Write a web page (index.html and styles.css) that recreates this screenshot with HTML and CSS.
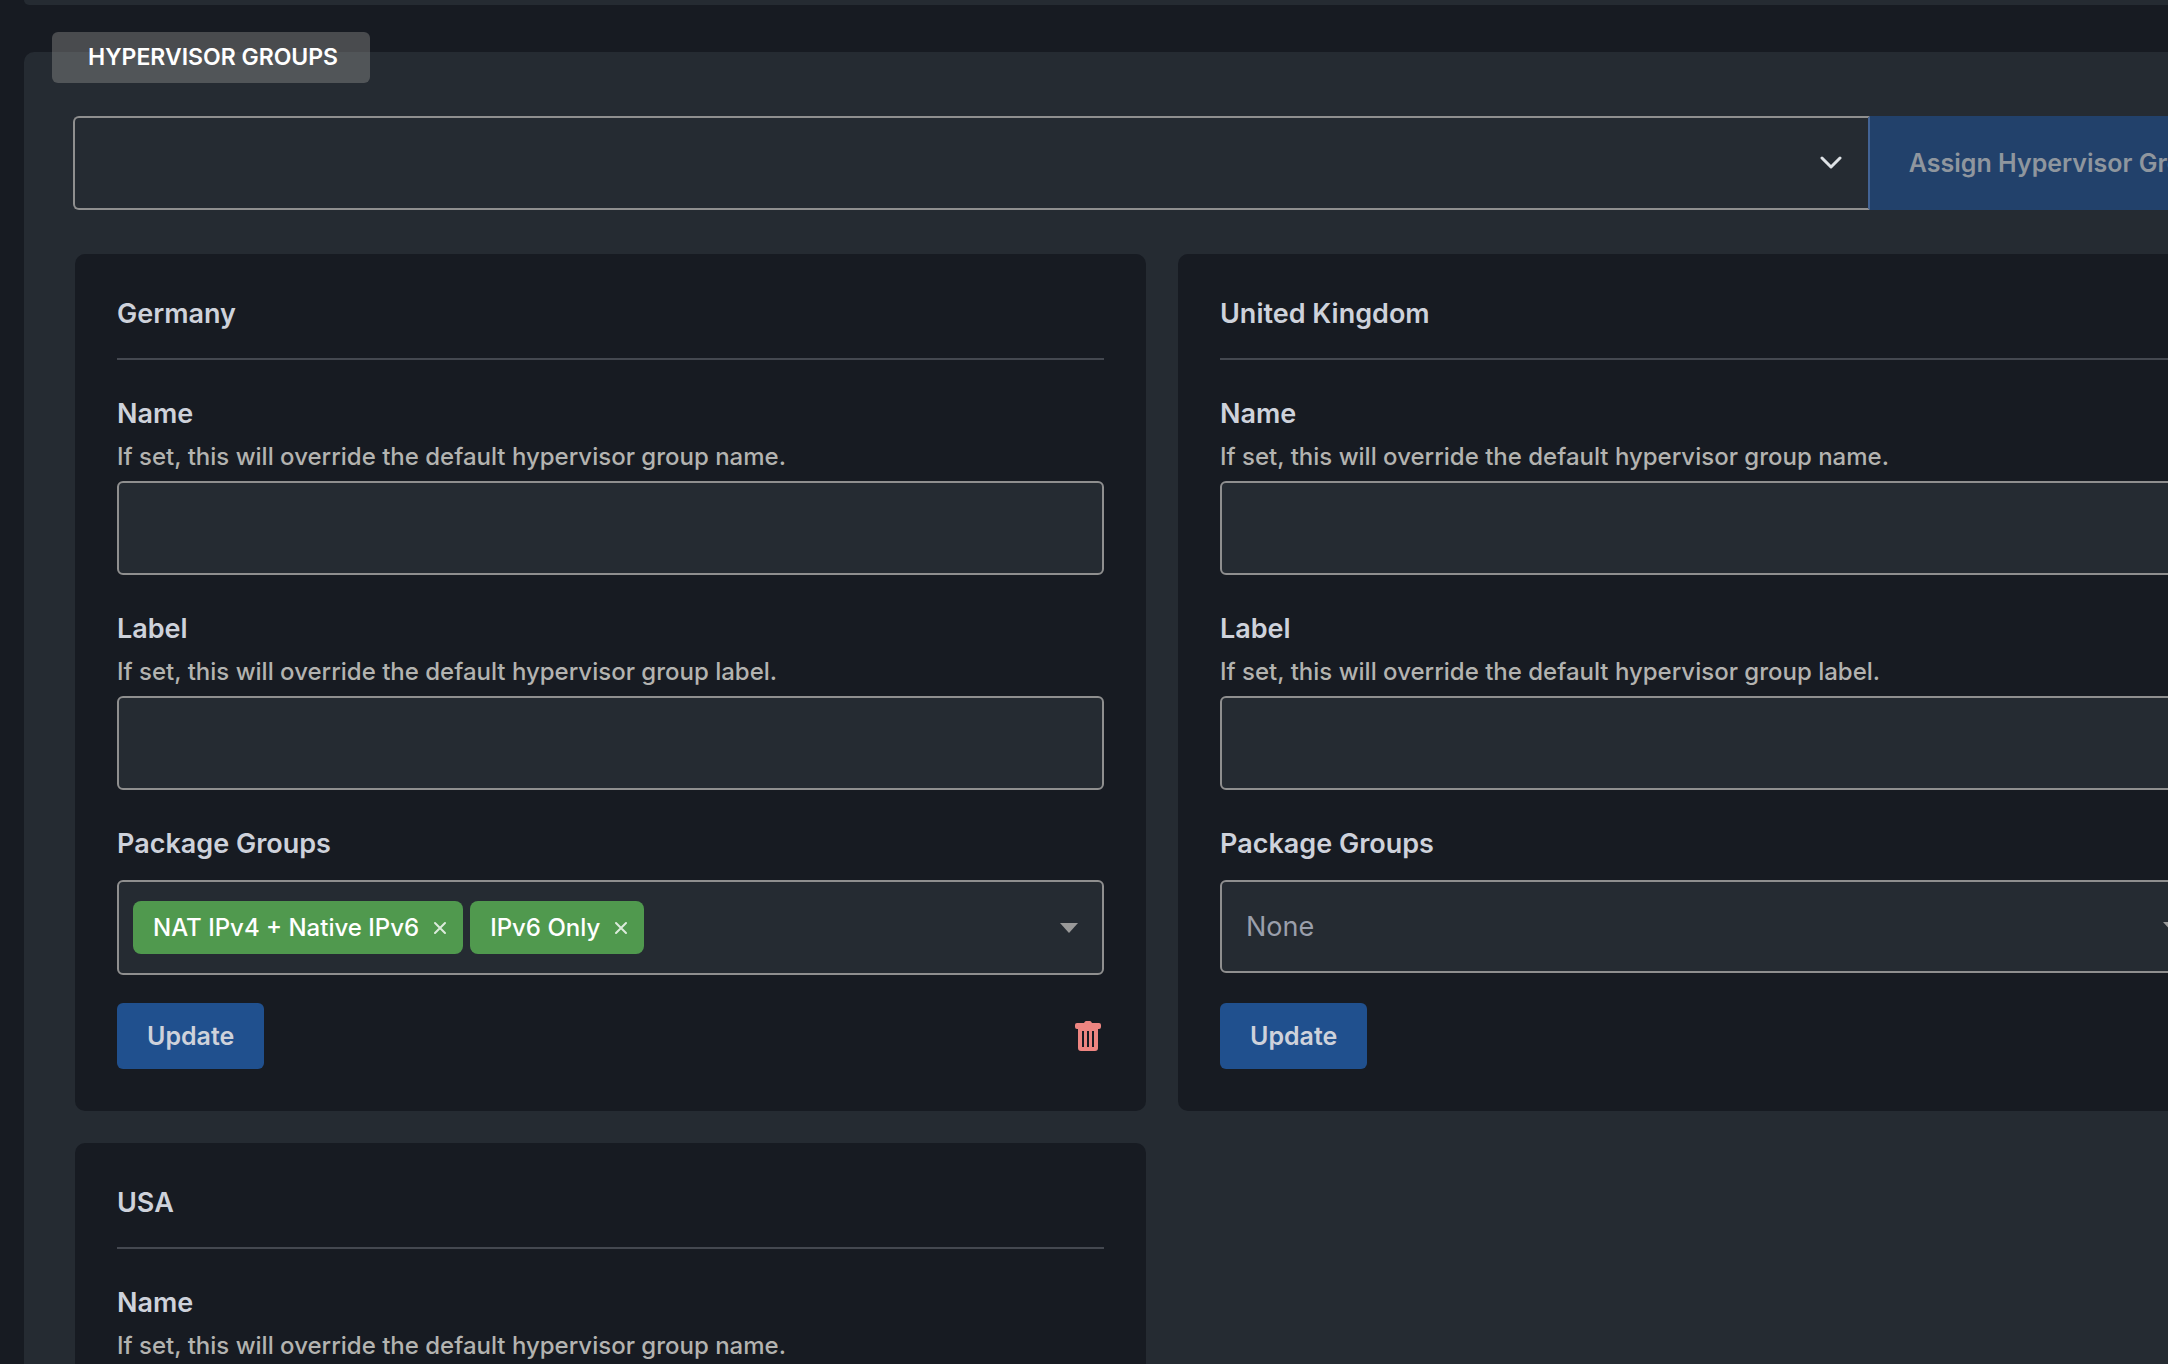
FILE: index.html
```html
<!DOCTYPE html>
<html lang="en">
<head>
	<meta charset="utf-8">
	<title>Hypervisor Groups</title>
	<link rel="stylesheet" href="styles.css">
</head>
<body>
	<main class="page">
		<div class="panel panel-previous"></div>

		<section class="panel">
			<h2 class="panel-title">HYPERVISOR GROUPS</h2>

			<form class="assign">
				<div class="assign-select">
					<select class="control" id="group" aria-label="Hypervisor group">
						<option></option>
					</select>
					<svg class="chevron" viewBox="0 0 22 14"><path d="M2 2l9 9 9-9"/></svg>
				</div>
				<button type="button" class="btn assign-btn" disabled>Assign Hypervisor Group</button>
			</form>

			<div class="cards">
				<form class="card">
					<h3>Germany</h3>
					<div class="field">
						<label for="de-name">Name</label>
						<p class="help">If set, this will override the default hypervisor group name.</p>
						<input class="control" type="text" id="de-name">
					</div>
					<div class="field">
						<label for="de-label">Label</label>
						<p class="help">If set, this will override the default hypervisor group label.</p>
						<input class="control" type="text" id="de-label">
					</div>
					<div class="field packages">
						<label id="de-packages">Package Groups</label>
						<div class="control multi has-tags" role="group" aria-labelledby="de-packages">
							<span class="tag">NAT IPv4 + Native IPv6
								<button type="button" aria-label="Remove"><svg viewBox="0 0 14 14"><path d="M2 2l10 10M12 2L2 12"/></svg></button>
							</span>
							<span class="tag">IPv6 Only
								<button type="button" aria-label="Remove"><svg viewBox="0 0 14 14"><path d="M2 2l10 10M12 2L2 12"/></svg></button>
							</span>
							<span class="caret"></span>
						</div>
					</div>
					<div class="actions">
						<button type="button" class="btn">Update</button>
						<button type="button" class="delete" aria-label="Delete">
							<svg viewBox="0 0 26 30"><path fill-rule="evenodd" d="M9 2q1-2 2-2h4q1 0 2 2h7q2 0 2 2v2q0 2-2 2h-1v19q0 3-3 3H6q-3 0-3-3V8H2Q0 8 0 6V4q0-2 2-2zM7 10v16h2V10zM12 10v16h2V10zM17 10v16h2V10z"/></svg>
						</button>
					</div>
				</form>

				<form class="card">
					<h3>United Kingdom</h3>
					<div class="field">
						<label for="uk-name">Name</label>
						<p class="help">If set, this will override the default hypervisor group name.</p>
						<input class="control" type="text" id="uk-name">
					</div>
					<div class="field">
						<label for="uk-label">Label</label>
						<p class="help">If set, this will override the default hypervisor group label.</p>
						<input class="control" type="text" id="uk-label">
					</div>
					<div class="field packages">
						<label for="uk-packages">Package Groups</label>
						<div class="control multi">
							<input type="text" id="uk-packages" placeholder="None">
							<span class="caret"></span>
						</div>
					</div>
					<div class="actions">
						<button type="button" class="btn">Update</button>
						<button type="button" class="delete" aria-label="Delete">
							<svg viewBox="0 0 26 30"><path fill-rule="evenodd" d="M9 2q1-2 2-2h4q1 0 2 2h7q2 0 2 2v2q0 2-2 2h-1v19q0 3-3 3H6q-3 0-3-3V8H2Q0 8 0 6V4q0-2 2-2zM7 10v16h2V10zM12 10v16h2V10zM17 10v16h2V10z"/></svg>
						</button>
					</div>
				</form>

				<form class="card">
					<h3>USA</h3>
					<div class="field">
						<label for="us-name">Name</label>
						<p class="help">If set, this will override the default hypervisor group name.</p>
						<input class="control" type="text" id="us-name">
					</div>
				</form>
			</div>
		</section>
	</main>
</body>
</html>
```

FILE: styles.css
```css
* {
	box-sizing: border-box;
}

body {
	margin: 0;
	background: #171b22;
	color: #ced2db;
	font-family: Inter, "Liberation Sans", sans-serif;
	font-size: 24px;
	line-height: 36px;
}

button, input, select {
	font: inherit;
	color: inherit;
}

/* the panels run on past the right edge of the window */
.page {
	height: 100vh;
	padding-left: 24px;
	overflow: hidden;
}

.panel {
	margin-right: -132px;
	padding: 0 51px 48px;
	background: #252b32;
	border-radius: 10px;
}

.panel-previous {
	height: 5px;
	margin-bottom: 47px;
	padding: 0;
	border-radius: 0 0 10px 10px;
}

.panel-title {
	position: relative;
	top: -20px;
	width: fit-content;
	margin: 0 0 13px -23px;
	padding: 0 32px 0 36px;
	background: rgba(144, 144, 140, 0.42);
	border-radius: 6px;
	color: #fff;
	font-size: 23px;
	font-weight: 600;
	line-height: 51px;
}

.control {
	display: block;
	width: 100%;
	height: 94px;
	padding: 0 24px;
	background: #252b32;
	border: 2px solid #8f8f8f;
	border-radius: 6px;
}

.assign {
	display: flex;
	margin: 0 0 44px -2px;
}

.assign-select {
	position: relative;
	flex: 1;
}

.assign-select select {
	appearance: none;
	border-right: 2px solid #426395;
	border-radius: 6px 0 0 6px;
}

.chevron {
	position: absolute;
	top: 40px;
	right: 28px;
	width: 22px;
	height: 14px;
	fill: none;
	stroke: #dee2e6;
	stroke-width: 3;
	stroke-linecap: round;
	stroke-linejoin: round;
}

.btn {
	height: 66px;
	padding: 0 30px;
	background: #20508e;
	border: 0;
	border-radius: 6px;
	font-size: 25px;
	font-weight: 600;
}

.assign-btn {
	height: 94px;
	padding: 0 36px 0 39px;
	background: #22416b;
	border-radius: 0 6px 6px 0;
	color: #8f969e;
}

.cards {
	display: grid;
	grid-template-columns: 1fr 1fr;
	gap: 32px;
}

.card {
	display: flex;
	flex-direction: column;
	padding: 42px;
	background: #171b22;
	border-radius: 10px;
}

.card h3 {
	margin: 0 0 36px;
	padding-bottom: 26px;
	border-bottom: 2px solid #444850;
	font-size: 27px;
	font-weight: 600;
	line-height: 36px;
}

.field {
	margin-bottom: 36px;
}

.field label {
	display: block;
	margin-bottom: 7px;
	font-size: 27px;
	font-weight: 600;
}

.help {
	margin: 0 0 6px;
	color: #b3b3b0;
	font-weight: 500;
}

.packages {
	margin-bottom: 28px;
}

.packages label {
	margin-bottom: 18px;
}

.multi {
	display: flex;
	align-items: center;
	gap: 7px;
	height: 93px;
}

.multi.has-tags {
	height: 95px;
	padding-left: 14px;
}

.multi input {
	flex: 1;
	padding: 0;
	background: none;
	border: 0;
	font-size: 27px;
}

.multi input::placeholder {
	color: #9a9fab;
	opacity: 1;
}

.tag {
	display: flex;
	align-items: center;
	gap: 14px;
	height: 53px;
	padding: 0 16px 0 20px;
	background: #50994e;
	border-radius: 8px;
	color: #fff;
	font-weight: 500;
}

.tag button {
	display: flex;
	padding: 0;
	background: none;
	border: 0;
}

.tag svg {
	width: 14px;
	height: 14px;
	stroke: #dcebdc;
	stroke-width: 2;
	stroke-linecap: round;
}

.caret {
	margin-left: auto;
	border: solid transparent;
	border-width: 10px 9px 0;
	border-top-color: #999;
}

.actions {
	display: flex;
	align-items: center;
	justify-content: space-between;
	margin-top: auto;
}

.delete {
	display: flex;
	padding: 0;
	margin-right: 3px;
	background: none;
	border: 0;
}

.delete svg {
	width: 26px;
	height: 30px;
	fill: #ee8581;
}
```
